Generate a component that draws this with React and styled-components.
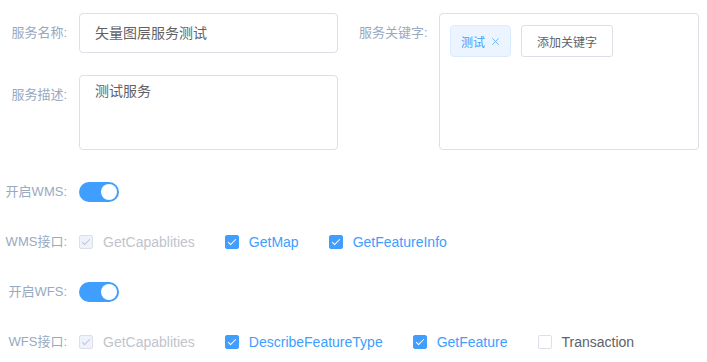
import React from "react";
import styled, { createGlobalStyle } from "styled-components";

const GlobalStyle = createGlobalStyle`
  body {
    margin: 0;
    background: #fff;
    font-family: "Liberation Sans", "Noto Sans CJK SC", sans-serif;
  }
`;

const Page = styled.div`
  padding-top: 13px;
  width: 707px;
`;

const TopGrid = styled.div`
  display: flex;
  gap: 21px;
`;

const Column = styled.div`
  display: flex;
  flex-direction: column;
  gap: 22px;
`;

const Item = styled.div`
  display: flex;
  align-items: flex-start;
`;

const Label = styled.label`
  flex: none;
  width: ${(p) => p.$w || 79}px;
  box-sizing: border-box;
  padding-right: 12px;
  text-align: right;
  font-size: 13px;
  color: #99a9bf;
  line-height: ${(p) => p.$lh || 40}px;
  white-space: nowrap;
`;

const Input = styled.div`
  width: 259px;
  height: 40px;
  box-sizing: border-box;
  border: 1px solid #dcdfe6;
  border-radius: 4px;
  padding: 0 15px;
  font-size: 14px;
  line-height: 38px;
  color: #606266;
`;

const TextArea = styled.div`
  width: 259px;
  height: 75px;
  box-sizing: border-box;
  border: 1px solid #dcdfe6;
  border-radius: 4px;
  padding: 5px 15px;
  font-size: 14px;
  line-height: 21px;
  color: #606266;
`;

const KeywordBox = styled.div`
  width: 260px;
  height: 137px;
  box-sizing: border-box;
  border: 1px solid #dcdfe6;
  border-radius: 4px;
  padding: 11px 10px;
  display: flex;
  align-items: flex-start;
  gap: 10px;
`;

const Tag = styled.span`
  display: inline-flex;
  align-items: center;
  height: 32px;
  box-sizing: border-box;
  padding: 0 9px 0 10px;
  background: #ecf5ff;
  border: 1px solid #d9ecff;
  border-radius: 4px;
  color: #409eff;
  font-size: 12px;
`;

const Close = styled.span`
  display: inline-flex;
  align-items: center;
  justify-content: center;
  width: 12px;
  height: 12px;
  margin-left: 4px;
`;

const Button = styled.button`
  height: 32px;
  padding: 0 15px;
  border: 1px solid #dcdfe6;
  border-radius: 3px;
  background: #fff;
  color: #606266;
  font-size: 12px;
  font-family: inherit;
`;

const Lower = styled.div`
  margin-top: 28px;
  display: flex;
  flex-direction: column;
  gap: 22px;
`;

const Row = styled.div`
  display: flex;
  align-items: center;
  height: 28px;
`;

const Switch = styled.span`
  position: relative;
  display: inline-block;
  width: 40px;
  height: 20px;
  border-radius: 10px;
  background: #409eff;
  &::after {
    content: "";
    position: absolute;
    top: 2px;
    left: 22px;
    width: 16px;
    height: 16px;
    border-radius: 50%;
    background: #fff;
  }
`;

const Check = styled.span`
  display: inline-flex;
  align-items: center;
  margin-right: 30px;
  font-size: 14px;
  color: ${(p) => (p.$disabled ? "#c0c4cc" : p.$checked ? "#409eff" : "#606266")};
`;

const Box = styled.span`
  position: relative;
  width: 14px;
  height: 14px;
  box-sizing: border-box;
  border: 1px solid
    ${(p) => (p.$checked && !p.$disabled ? "#409eff" : "#dcdfe6")};
  border-radius: 2px;
  background: ${(p) =>
    p.$disabled ? "#edf2fc" : p.$checked ? "#409eff" : "#fff"};
  margin-right: 10px;
  &::after {
    content: "";
    display: ${(p) => (p.$checked ? "block" : "none")};
    position: absolute;
    left: 4px;
    top: 1px;
    width: 3px;
    height: 7px;
    border: 1px solid ${(p) => (p.$disabled ? "#c0c4cc" : "#fff")};
    border-left: 0;
    border-top: 0;
    transform: rotate(45deg);
  }
`;

function Checkbox({ label, checked, disabled }) {
  return (
    <Check $checked={checked} $disabled={disabled}>
      <Box $checked={checked} $disabled={disabled} />
      {label}
    </Check>
  );
}

export default function App() {
  return (
    <Page>
      <GlobalStyle />
      <TopGrid>
        <Column>
          <Item>
            <Label>服务名称:</Label>
            <Input>矢量图层服务测试</Input>
          </Item>
          <Item>
            <Label>服务描述:</Label>
            <TextArea>测试服务</TextArea>
          </Item>
        </Column>
        <Column>
          <Item>
            <Label $w={80}>服务关键字:</Label>
            <KeywordBox>
              <Tag>
                测试
                <Close>
                  <svg width="9" height="9" viewBox="0 0 10 10">
                    <path
                      d="M1.5 1.5L8.5 8.5M8.5 1.5L1.5 8.5"
                      stroke="#66b1ff"
                      strokeWidth="1"
                      fill="none"
                    />
                  </svg>
                </Close>
              </Tag>
              <Button>添加关键字</Button>
            </KeywordBox>
          </Item>
        </Column>
      </TopGrid>
      <Lower>
        <Row>
          <Label $lh={28}>开启WMS:</Label>
          <Switch />
        </Row>
        <Row>
          <Label $lh={28}>WMS接口:</Label>
          <Checkbox label="GetCapablities" checked disabled />
          <Checkbox label="GetMap" checked />
          <Checkbox label="GetFeatureInfo" checked />
        </Row>
        <Row>
          <Label $lh={28}>开启WFS:</Label>
          <Switch />
        </Row>
        <Row>
          <Label $lh={28}>WFS接口:</Label>
          <Checkbox label="GetCapablities" checked disabled />
          <Checkbox label="DescribeFeatureType" checked />
          <Checkbox label="GetFeature" checked />
          <Checkbox label="Transaction" />
        </Row>
      </Lower>
    </Page>
  );
}
